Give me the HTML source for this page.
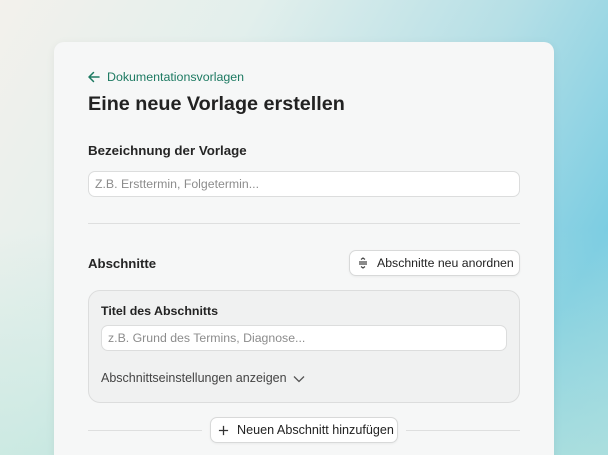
<!DOCTYPE html>
<html><head><meta charset="utf-8"><style>
*{box-sizing:border-box;margin:0;padding:0}
html,body{width:608px;height:455px;overflow:hidden}
body{font-family:"Liberation Sans",sans-serif;position:relative;
background:linear-gradient(120deg,#f3f1ec 0%,#e2efec 30%,#b5dfe6 60%,#7ccde2 85%,#8fd3e2 100%);}
.bg2{position:absolute;inset:0;background:linear-gradient(to top,rgba(190,230,220,.6),rgba(190,230,220,0) 50%)}
.card{position:absolute;left:54px;top:42px;width:500px;height:430px;background:#f6f7f7;border-radius:10px;box-shadow:0 2px 10px rgba(0,0,0,.06)}
.a{position:absolute;white-space:nowrap}
.back{left:88px;top:70px;color:#1d7a62;font-size:12.4px}
h1{position:absolute;left:88px;top:93px;font-size:19.8px;font-weight:600;color:#222;white-space:nowrap}
.lbl{font-weight:600;color:#252525}
.inp{position:absolute;background:#fff;border:1px solid #dcdddd;border-radius:7px;color:#8c8c8c;font-size:12px;padding-left:6px;display:flex;align-items:center}
.btn{position:absolute;background:#fff;border:1px solid #d8d9d9;border-radius:7px;font-size:12.3px;color:#222;display:flex;align-items:center;box-shadow:0 1px 2px rgba(0,0,0,.05)}
.line{position:absolute;height:1px;background:#dedfdf}
.sec{position:absolute;left:88px;top:290px;width:432px;height:113px;background:#f0f1f1;border:1px solid #dcdddd;border-radius:12px}
</style></head><body><div class="bg2"></div>
<div class="card"></div>
<svg class="a" style="left:87px;top:70px" width="14" height="14" viewBox="0 0 14 14"><path d="M12 7H2M6.5 2.5L2 7l4.5 4.5" fill="none" stroke="#1d7a62" stroke-width="1.5" stroke-linecap="round" stroke-linejoin="round"/></svg>
<div class="a back" style="left:107px">Dokumentationsvorlagen</div>
<h1>Eine neue Vorlage erstellen</h1>
<div class="a lbl" style="left:88px;top:143px;font-size:13.3px">Bezeichnung der Vorlage</div>
<div class="inp" style="left:88px;top:171px;width:432px;height:26px;font-size:12.3px">Z.B. Ersttermin, Folgetermin...</div>
<div class="line" style="left:88px;top:223px;width:432px"></div>
<div class="a lbl" style="left:88px;top:256px;font-size:13.2px">Abschnitte</div>
<div class="btn" style="left:349px;top:250px;width:171px;height:26px"><svg style="margin-left:8px;margin-right:9px" width="10" height="12" viewBox="0 0 10 12"><path d="M1 5h8M1 7h8M3 2.5L5 1l2 1.5M3 9.5L5 11l2-1.5" fill="none" stroke="#444" stroke-width="1.2"/></svg>Abschnitte neu anordnen</div>
<div class="sec"></div>
<div class="a lbl" style="left:101px;top:304px;font-size:12.4px;color:#222">Titel des Abschnitts</div>
<div class="inp" style="left:101px;top:325px;width:406px;height:26px;font-size:12.3px">z.B. Grund des Termins, Diagnose...</div>
<div class="a" style="left:101px;top:371px;font-size:12.5px;color:#444">Abschnittseinstellungen anzeigen</div>
<svg class="a" style="left:293px;top:375px" width="12" height="8" viewBox="0 0 12 8"><path d="M1 1.5l5 5 5-5" fill="none" stroke="#555" stroke-width="1.3"/></svg>
<div class="line" style="left:88px;top:430px;width:114px"></div>
<div class="line" style="left:406px;top:430px;width:114px"></div>
<div class="btn" style="left:210px;top:417px;width:188px;height:26px;font-size:12.6px"><svg style="margin-left:7px;margin-right:8px" width="11" height="11" viewBox="0 0 12 12"><path d="M6 1v10M1 6h10" stroke="#333" stroke-width="1.4"/></svg>Neuen Abschnitt hinzufügen</div>
</body></html>
